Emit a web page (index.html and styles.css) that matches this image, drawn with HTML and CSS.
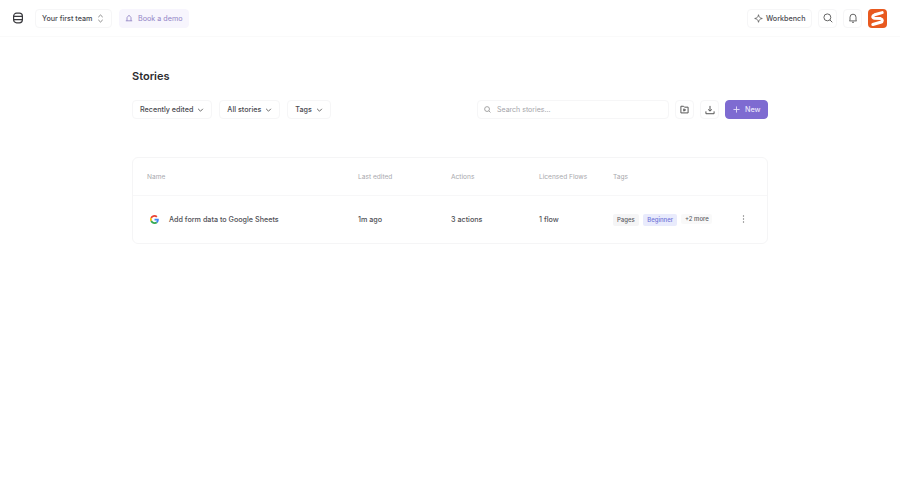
FILE: index.html
```html
<!DOCTYPE html>
<html lang="en">
<head>
<meta charset="utf-8">
<title>Stories</title>
<link rel="stylesheet" href="styles.css">
</head>
<body>
<header class="topbar">
  <div class="group">
    <button class="plain-icon" aria-label="Database">
      <svg width="12" height="12" viewBox="0 0 12 12" fill="none" stroke="#3a3a3e" stroke-width="1.2"><rect x="1.600" y="1.200" width="8.800" height="9.600" rx="3"/><path d="M1.600 4.400h8.800M1.600 7.600h8.800"/></svg>
    </button>
    <button class="btn team"><span>Your first team</span>
      <svg width="7" height="9" viewBox="0 0 8 10" fill="none" stroke="#777" stroke-width="1"><path d="M1.500 3.400 4 1l2.500 2.400M1.500 6.600 4 9l2.500-2.400"/></svg>
    </button>
    <button class="btn demo">
      <svg width="8" height="8" viewBox="0 0 10 10" fill="none" stroke="#8a7cc0" stroke-width="1"><path d="M1 8.500h8M2.500 8.500V4.500L5 1.500l2.500 3v4"/></svg>
      <span>Book a demo</span>
    </button>
  </div>
  <div class="group right">
    <button class="btn bench">
      <svg width="9" height="9" viewBox="0 0 10 10" fill="none" stroke="#666" stroke-width="1"><path d="M5 .8C5.400 3.400 6.600 4.600 9.200 5 6.600 5.400 5.400 6.600 5 9.200 4.600 6.600 3.400 5.400.8 5 3.400 4.600 4.600 3.400 5 .8Z" stroke-linejoin="round"/></svg>
      <span>Workbench</span>
    </button>
    <button class="btn square" aria-label="Search">
      <svg width="10" height="10" viewBox="0 0 11 11" fill="none" stroke="#666" stroke-width="1.100"><circle cx="4.800" cy="4.800" r="3.800"/><path d="m7.600 7.600 2.600 2.600"/></svg>
    </button>
    <button class="btn square" aria-label="Notifications">
      <svg width="10" height="10" viewBox="0 0 11 11" fill="none" stroke="#666" stroke-width="1.100"><path d="M2.200 8V4.600a3.300 3.300 0 0 1 6.600 0V8l.7.7h-8Z"/><path d="M4.400 10.200h2.200"/></svg>
    </button>
    <div class="avatar">
      <svg width="19" height="19" viewBox="0 0 19 19"><rect width="19" height="19" rx="4" fill="#e8591f"/><path d="M14.200 3.600 6.600 5.800C4.200 6.600 4.200 8.800 6.400 9.300l6.200.3c2.300.6 2.300 3 0 3.700L4.800 15.500" fill="none" stroke="#fff" stroke-width="3" stroke-linecap="round"/></svg>
    </div>
  </div>
</header>

<main class="page">
  <h1 class="title">Stories</h1>
  <div class="toolbar">
    <div class="filters">
      <button class="btn select"><span>Recently edited</span> <svg width="7" height="4" viewBox="0 0 8 5" fill="none" stroke="#555" stroke-width="1.100"><path d="m1 1 3 3 3-3"/></svg></button>
      <button class="btn select"><span>All stories</span> <svg width="7" height="4" viewBox="0 0 8 5" fill="none" stroke="#555" stroke-width="1.100"><path d="m1 1 3 3 3-3"/></svg></button>
      <button class="btn select"><span>Tags</span> <svg width="7" height="4" viewBox="0 0 8 5" fill="none" stroke="#555" stroke-width="1.100"><path d="m1 1 3 3 3-3"/></svg></button>
    </div>
    <div class="actions">
      <label class="search">
        <svg width="7" height="7" viewBox="0 0 11 11" fill="none" stroke="#999" stroke-width="1.400"><circle cx="4.800" cy="4.800" r="3.800"/><path d="m7.600 7.600 2.600 2.600"/></svg>
        <span>Search stories...</span>
      </label>
      <button class="btn square" aria-label="Folder">
        <svg width="9" height="9" viewBox="0 0 10 10" fill="none" stroke="#555" stroke-width="1.100"><path d="M1 8.800V1.400h3l1 1h4v6.400Z"/><path d="M4.200 4.300v2.500L6.300 5.500Z"/></svg>
      </button>
      <button class="btn square" aria-label="Download">
        <svg width="10" height="10" viewBox="0 0 11 11" fill="none" stroke="#555" stroke-width="1.100"><path d="M5.500 1v5.600M3.400 4.800l2.100 2 2.100-2M1 7v2.600h9V7"/></svg>
      </button>
      <button class="btn new">
        <svg width="7" height="7" viewBox="0 0 8 8" fill="none" stroke="#e6e0fa" stroke-width="1"><path d="M4 .5v7M.5 4h7"/></svg>
        <span>New</span>
      </button>
    </div>
  </div>

  <section class="table">
    <div class="row head">
      <div>Name</div>
      <div>Last edited</div>
      <div>Actions</div>
      <div>Licensed Flows</div>
      <div>Tags</div>
    </div>
    <div class="row body">
      <div class="name">
        <svg width="9" height="9" viewBox="0 0 48 48"><path fill="#EA4335" d="M24 9.500c3.500 0 6.700 1.300 9.100 3.500l6.800-6.800C35.800 2.400 30.300 0 24 0 14.600 0 6.500 5.400 2.600 13.200l7.900 6.200C12.400 13.600 17.700 9.500 24 9.500z"/><path fill="#4285F4" d="M46.900 24.500c0-1.600-.1-3.100-.4-4.500H24v9h12.900c-.6 3-2.200 5.500-4.700 7.200l7.700 6c4.500-4.200 7-10.300 7-17.700z"/><path fill="#FBBC05" d="M10.500 28.600a14.500 14.500 0 0 1 0-9.200l-7.900-6.200a24 24 0 0 0 0 21.600z"/><path fill="#34A853" d="M24 48c6.500 0 11.900-2.100 15.900-5.800l-7.700-6c-2.200 1.400-4.900 2.300-8.200 2.300-6.300 0-11.600-4.200-13.500-9.900l-7.900 6.200C6.500 42.600 14.600 48 24 48z"/></svg>
        <span>Add form data to Google Sheets</span>
      </div>
      <div>1m ago</div>
      <div>3 actions</div>
      <div>1 flow</div>
      <div class="tags">
        <span class="tag">Pages</span>
        <span class="tag blue">Beginner</span>
        <span class="tag more">+2 more</span>
      </div>
      <button class="kebab" aria-label="More">
        <svg width="3" height="8" viewBox="0 0 3 8" fill="#777"><circle cx="1.500" cy="1" r=".7"/><circle cx="1.500" cy="4" r=".7"/><circle cx="1.500" cy="7" r=".7"/></svg>
      </button>
    </div>
  </section>
</main>
</body>
</html>
```
FILE: styles.css
```css
* { box-sizing: border-box; }
html, body { margin: 0; padding: 0; }
body {
  width: 900px;
  height: 484px;
  overflow: hidden;
  background: #fff;
  font-family: Inter, "Liberation Sans", sans-serif;
  font-size: 7.2px;
  color: #4a4a50;
}
button { font: inherit; color: inherit; background: none; margin: 0; }
svg { display: block; flex: none; }
span { white-space: nowrap; }

.topbar {
  height: 37px;
  padding: 0 13px 0 12px;
  display: flex;
  align-items: center;
  justify-content: space-between;
  border-bottom: 1px solid #fafafa;
}
.group { display: flex; align-items: center; }
.right { gap: 6px; }

.btn {
  display: flex;
  align-items: center;
  border: 1px solid #f6f6f7;
  border-radius: 4px;
  background: #fff;
  padding: 0;
  height: 19px;
  font-weight: 500;
}
.plain-icon { border: 0; padding: 0; width: 12px; height: 12px; }
.team { margin-left: 11px; padding: 0 7px 0 6px; width: 77px; justify-content: space-between; }
.demo { margin-left: 7px; width: 70px; padding: 0 5px; gap: 5px; background: #f7f5fd; border-color: #f7f5fd; color: #9184c6; font-weight: 400; }
.bench { width: 65px; padding: 0 6px; gap: 3px; }
.square { width: 19px; justify-content: center; }

.page { margin: 0 132px; padding-top: 32px; }
.title { margin: 0; font-size: 11px; line-height: 15px; font-weight: 600; color: #2c2c30; }

.toolbar { margin-top: 16px; display: flex; justify-content: space-between; align-items: center; }
.filters { display: flex; align-items: center; gap: 7px; }
.actions { display: flex; align-items: center; gap: 6px; }
.select { padding: 0 7px; gap: 4px; }

.search {
  width: 192px;
  height: 19px;
  padding: 0 6px;
  display: flex;
  align-items: center;
  gap: 6px;
  border: 1px solid #f6f6f7;
  border-radius: 4px;
  color: #a4a4aa;
  font-size: 7px;
}
.new {
  width: 43px;
  padding: 0 7px;
  gap: 5px;
  background: #7e6bd1;
  border-color: #7e6bd1;
  color: #e9e5fa;
}

.table {
  margin-top: 38px;
  border: 1px solid #f5f5f6;
  border-radius: 6px;
}
.row { display: grid; grid-template-columns: 211px 93px 88px 74px 1fr; padding-left: 14px; align-items: center; }
.head { height: 38px; border-bottom: 1px solid #f7f7f8; color: #a8a8ad; font-size: 6.6px; }
.body { height: 47px; position: relative; font-weight: 500; color: #505056; }
.name { display: flex; align-items: center; gap: 10px; padding-left: 3px; }
.tags { display: flex; align-items: center; gap: 4px; }
.tag {
  height: 12px;
  padding: 0 4px;
  display: flex;
  align-items: center;
  border-radius: 2px;
  background: #f5f5f6;
  font-size: 6px;
  color: #5a5a60;
}
.blue { padding: 0 4.500px; background: #e9ebfc; color: #6f73d8; }
.more { height: 10px; margin-top: -2px; padding: 0 3.500px; background: #f9f9f9; }
.kebab {
  position: absolute;
  right: 22px;
  top: 19px;
  border: 0;
  padding: 0;
}
```
